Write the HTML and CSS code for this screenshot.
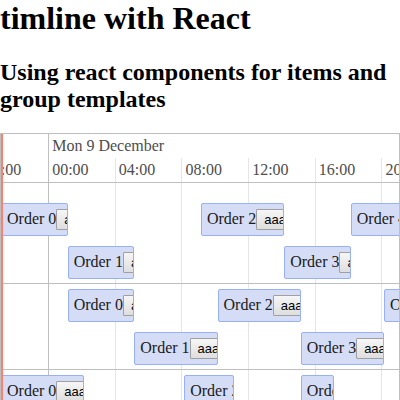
FILE: index.html
```
<!DOCTYPE html>
<html lang="en">
<head>
<meta charset="utf-8">
<title>timline with React</title>
<link rel="stylesheet" href="styles.css">
</head>
<body>
<h1>timline with React</h1>
<h2>Using react components for items and group templates</h2>
<div class="timeline">
  <div class="ticks lines">
    <div class="day"></div>
    <div class="day first"></div>
    <div></div><div></div><div></div><div></div><div></div>
  </div>
  <div class="content">
    <div class="axis">
      <div class="ticks major"><div></div><div class="date">Mon 9 December</div></div>
      <div class="ticks minor">
        <div class="cut">20:00</div><div>00:00</div><div>04:00</div><div>08:00</div><div>12:00</div><div>16:00</div><div>20:00</div>
      </div>
    </div>
    <div class="group top">
      <div class="lane">
        <div class="item" style="grid-column: 1 / span 4">Order 0<button type="button">aaa</button></div>
        <div class="item" style="grid-column: 13 / span 5">Order 2<button type="button">aaa</button></div>
        <div class="item" style="grid-column: 22 / span 4">Order 4<button type="button">aaa</button></div>
      </div>
      <div class="lane">
        <div class="item" style="grid-column: 5 / span 4">Order 1<button type="button">aaa</button></div>
        <div class="item" style="grid-column: 18 / span 4">Order 3<button type="button">aaa</button></div>
      </div>
    </div>
    <div class="group">
      <div class="lane">
        <div class="item" style="grid-column: 5 / span 4">Order 0<button type="button">aaa</button></div>
        <div class="item" style="grid-column: 14 / span 5">Order 2<button type="button">aaa</button></div>
        <div class="item" style="grid-column: 24 / span 4">Order 4<button type="button">aaa</button></div>
      </div>
      <div class="lane">
        <div class="item" style="grid-column: 9 / span 5">Order 1<button type="button">aaa</button></div>
        <div class="item" style="grid-column: 19 / span 5">Order 3<button type="button">aaa</button></div>
      </div>
    </div>
    <div class="group">
      <div class="lane">
        <div class="item" style="grid-column: 1 / span 5">Order 0<button type="button">aaa</button></div>
        <div class="item" style="grid-column: 12 / span 3">Order 2<button type="button">aaa</button></div>
        <div class="item" style="grid-column: 19 / span 2">Order 3<button type="button">aaa</button></div>
      </div>
    </div>
  </div>
  <div class="current-time"></div>
</div>
</body>
</html>
```
FILE: styles.css
```
* {
  box-sizing: border-box;
}

body {
  display: flex;
  flex-direction: column;
  height: 100vh;
  margin: 0;
  background: #fff;
  color: #000;
  font-family: "Liberation Serif", serif;
  font-size: 16px;
}

h1 {
  margin: 0 0 22px;
  font-size: 32px;
  line-height: 37px;
}

h2 {
  margin: 0 0 20px;
  font-size: 24px;
  line-height: 27px;
}

.timeline {
  --hour: calc((100% + 2px) / 24);
  position: relative;
  display: grid;
  grid-template-columns: minmax(0, 1fr);
  flex: 1;
  min-height: 0;
  overflow: hidden;
  border: 1px solid #bfbfbf;
  border-bottom: 0;
}

.lines,
.content {
  grid-area: 1 / 1;
  min-width: 0;
}

.ticks {
  display: grid;
  grid-template-columns: calc(var(--hour) * 2.83) repeat(6, calc(var(--hour) * 4));
}

/* vertical grid lines behind the items */
.lines > div {
  margin-top: 24px;
  border-left: 1px solid #e5e5e5;
}

.lines > .day {
  margin-top: 0;
  border-left-color: #bfbfbf;
}

.content {
  position: relative;
}

.axis {
  height: 49px;
  border-bottom: 1px solid #bfbfbf;
  color: #4d4d4d;
  line-height: 18px;
}

.axis .ticks > div {
  height: 24px;
  padding: 3px 4px;
  white-space: nowrap;
}

.axis .date {
  grid-column: 2 / -1;
}

.axis .ticks > .cut {
  display: flex;
  justify-content: flex-end;
  padding-right: 27px;
}

.group {
  display: grid;
  gap: 10px;
  padding: 5px 0 4px;
  border-bottom: 1px solid #bfbfbf;
}

.group.top {
  padding-top: 20px;
}

.lane {
  display: grid;
  grid-template-columns: repeat(24, var(--hour));
  grid-auto-columns: 17px;
}

.item {
  height: 33px;
  padding: 5px;
  overflow: hidden;
  border: 1px solid #97b0f8;
  border-radius: 2px;
  background: #d5ddf6;
  color: #1a1a1a;
  line-height: 18px;
  white-space: nowrap;
}

.item button {
  height: 21px;
  margin: 0;
  padding: 1px 7px;
  border: 1px solid #a0a0a0;
  border-radius: 1px;
  background: linear-gradient(#f6f6f6, #dedede);
  color: #000;
  font: 13px/17px "Liberation Sans", sans-serif;
}

.current-time {
  position: absolute;
  top: 0;
  bottom: 0;
  left: 0;
  width: 2px;
  background: #ff7f6e;
}
```
